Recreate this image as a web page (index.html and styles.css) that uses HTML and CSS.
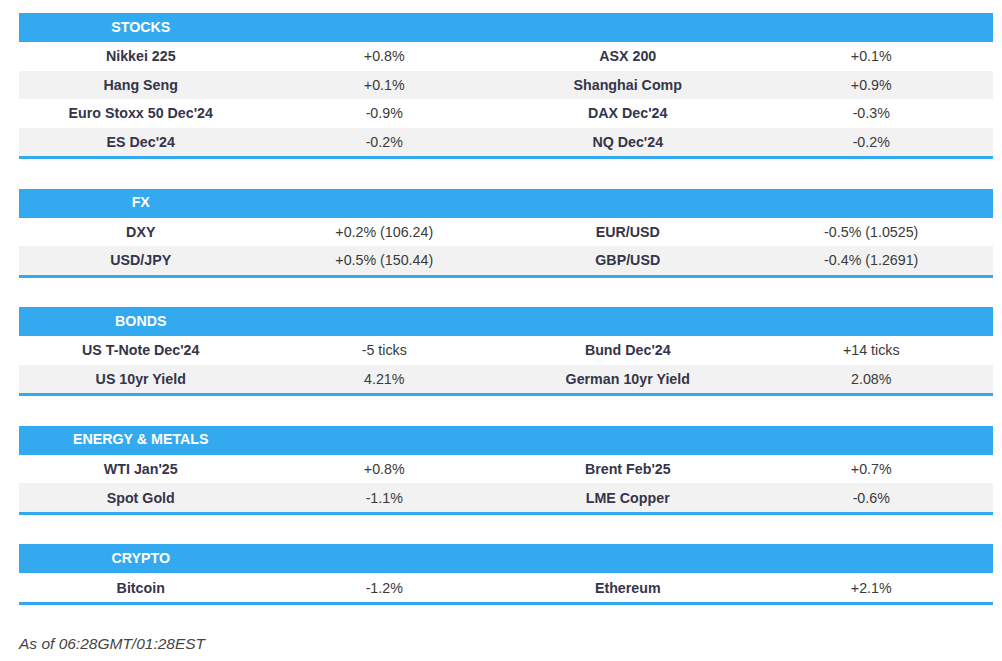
FILE: index.html
```html
<!DOCTYPE html>
<html lang="en">
<head>
<meta charset="utf-8">
<title>Market snapshot</title>
<link rel="stylesheet" href="styles.css">
</head>
<body>
<main class="page">
  <section class="block">
    <div class="head"><span>STOCKS</span></div>
    <div class="row"><b>Nikkei 225</b><span>+0.8%</span><b>ASX 200</b><span>+0.1%</span></div>
    <div class="row alt"><b>Hang Seng</b><span>+0.1%</span><b>Shanghai Comp</b><span>+0.9%</span></div>
    <div class="row"><b>Euro Stoxx 50 Dec'24</b><span>-0.9%</span><b>DAX Dec'24</b><span>-0.3%</span></div>
    <div class="row alt"><b>ES Dec'24</b><span>-0.2%</span><b>NQ Dec'24</b><span>-0.2%</span></div>
  </section>
  <section class="block">
    <div class="head"><span>FX</span></div>
    <div class="row"><b>DXY</b><span>+0.2% (106.24)</span><b>EUR/USD</b><span>-0.5% (1.0525)</span></div>
    <div class="row alt"><b>USD/JPY</b><span>+0.5% (150.44)</span><b>GBP/USD</b><span>-0.4% (1.2691)</span></div>
  </section>
  <section class="block">
    <div class="head"><span>BONDS</span></div>
    <div class="row"><b>US T-Note Dec'24</b><span>-5 ticks</span><b>Bund Dec'24</b><span>+14 ticks</span></div>
    <div class="row alt"><b>US 10yr Yield</b><span>4.21%</span><b>German 10yr Yield</b><span>2.08%</span></div>
  </section>
  <section class="block">
    <div class="head"><span>ENERGY &amp; METALS</span></div>
    <div class="row"><b>WTI Jan'25</b><span>+0.8%</span><b>Brent Feb'25</b><span>+0.7%</span></div>
    <div class="row alt"><b>Spot Gold</b><span>-1.1%</span><b>LME Copper</b><span>-0.6%</span></div>
  </section>
  <section class="block">
    <div class="head"><span>CRYPTO</span></div>
    <div class="row"><b>Bitcoin</b><span>-1.2%</span><b>Ethereum</b><span>+2.1%</span></div>
  </section>
  <p class="note">As of 06:28GMT/01:28EST</p>
</main>
</body>
</html>
```
FILE: styles.css
```css
html, body {
  margin: 0;
  padding: 0;
  background: #ffffff;
}
body {
  font-family: "Liberation Sans", Arial, sans-serif;
  font-size: 14.25px;
  color: #35354a;
}
.page {
  padding: 13px 0 0 19px;
  display: flex;
  flex-direction: column;
  gap: 29.6px;
  width: 974px;
}
.block {
  display: flex;
  flex-direction: column;
  border-bottom: 3px solid #33aaf0;
}
.head,
.row {
  display: grid;
  grid-template-columns: repeat(4, 1fr);
  align-items: center;
  text-align: center;
}
.head {
  box-sizing: border-box;
  height: 29px;
  padding-bottom: 2px;
  background: #33aaf0;
  color: #ffffff;
  font-weight: bold;
}
.row {
  height: 28.5px;
  background: #ffffff;
}
.row.alt {
  background: #f2f2f2;
}
.row b {
  font-weight: bold;
  color: #35354a;
}
.row span {
  color: #3a3a3a;
}
.note {
  margin: 1px 0 0 0;
  font-size: 15.5px;
  font-style: italic;
  color: #444444;
  line-height: 18px;
}
```
